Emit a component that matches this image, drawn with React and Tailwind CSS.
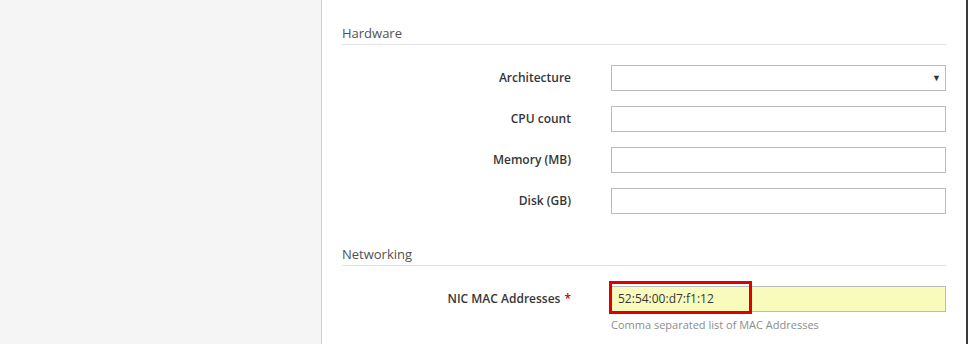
import React from 'react';

const Field = ({ label, required, children }) => (
  <div className="flex items-start">
    <label className="w-[229px] h-[26px] flex items-center justify-end text-[12px] font-semibold text-[#363636]">
      {label}
      {required && <span className="ml-[4px] text-[#cc0000]">*</span>}
    </label>
    <div className="ml-[40px] w-[335px]">{children}</div>
  </div>
);

const TextInput = ({ value = '', highlight }) => (
  <div
    className={
      'h-[26px] border border-[#bbbbbb] flex items-center px-[6px] text-[12px] text-[#363636] ' +
      (highlight ? 'bg-[#f9fbbd]' : 'bg-white')
    }
  >
    {value}
  </div>
);

const Section = ({ title, children }) => (
  <div>
    <h3 className="text-[13px] leading-[18px] text-[#4d5258] pb-[2px] border-b border-[#e3e3e3]">{title}</h3>
    <div className="mt-[20px] flex flex-col gap-[15px]">{children}</div>
  </div>
);

export default function App() {
  return (
    <div className="flex h-[344px] w-[968px] overflow-hidden bg-white" style={{ fontFamily: '"Open Sans", "Noto Sans", sans-serif' }}>
      <aside className="w-[322px] shrink-0 bg-[#f5f5f5] border-r border-[#d1d1d1]" />
      <main className="flex-1 px-[20px] pt-[24px] border-r-2 border-[#3a3a3a]">
        <Section title="Hardware">
          <Field label="Architecture">
            <div className="h-[26px] border border-[#bbbbbb] bg-white flex items-center justify-end pr-[4px]">
              <span className="text-[9px] text-[#333]">▼</span>
            </div>
          </Field>
          <Field label="CPU count">
            <TextInput />
          </Field>
          <Field label="Memory (MB)">
            <TextInput />
          </Field>
          <Field label="Disk (GB)">
            <TextInput />
          </Field>
        </Section>

        <div className="mt-[31px]">
          <Section title="Networking">
            <Field label="NIC MAC Addresses" required>
              <div className="relative">
                <TextInput value="52:54:00:d7:f1:12" highlight />
                <div className="absolute left-[-2px] top-[-5px] w-[143px] h-[33px] border-[3px] border-[#e00000] pointer-events-none" />
              </div>
              <p className="mt-[5px] text-[11px] text-[#8b8d8f]">Comma separated list of MAC Addresses</p>
            </Field>
          </Section>
        </div>
      </main>
    </div>
  );
}
